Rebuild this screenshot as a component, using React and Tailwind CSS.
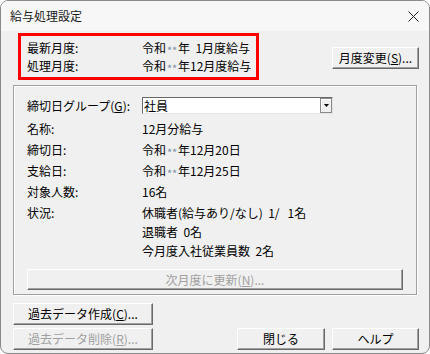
import React from "react";

const font = { fontFamily: '"Noto Sans CJK JP", "Noto Sans", sans-serif' };

function Btn({ children, className = "", disabled = false }) {
  return (
    <div
      className={
        "flex items-center justify-center bg-[#f0f0f0] border-t border-l border-t-white border-l-white border-b border-r border-b-[#696969] border-r-[#696969] shadow-[inset_-1px_-1px_0_#a0a0a0] text-[12px] leading-none " +
        (disabled ? "text-[#a0a0a0] " : "text-black ") +
        className
      }
    >
      {children}
    </div>
  );
}

function Stars() {
  return <span className="inline-block w-[12px] text-center text-[11px] leading-[11px] text-[#7d8ea8] relative top-[2px]">**</span>;
}

export default function App() {
  return (
    <div style={font} className="w-[430px] h-[354px] bg-[#f0f0f0] border border-[#8a8a8a] rounded-[8px] overflow-hidden flex flex-col text-black text-[12px]">
      <div className="h-[30px] shrink-0 bg-[#f7f7f7] flex items-center justify-between pl-[9px] pr-[9px]">
        <span className="text-[12px] text-[#1a1a1a]">給与処理設定</span>
        <svg width="11" height="11" viewBox="0 0 11 11" className="mr-[1px]">
          <path d="M0.5 0.5 L10.5 10.5 M10.5 0.5 L0.5 10.5" stroke="#222" strokeWidth="1" />
        </svg>
      </div>
      <div className="flex flex-col pl-[12px] pr-[10px]">
        <div className="flex mt-[2px]">
          <div className="ml-[5px] w-[241px] h-[47px] border-[3px] border-[#ff0000] flex flex-col py-[3px] pl-[6px] leading-[18px]">
            <div className="flex">
              <span className="w-[115px]">最新月度:</span>
              <span>令和<Stars />年&nbsp;&nbsp;1月度給与</span>
            </div>
            <div className="flex">
              <span className="w-[115px]">処理月度:</span>
              <span>令和<Stars />年12月度給与</span>
            </div>
          </div>
          <Btn className="ml-auto mt-[14px] w-[87px] h-[22px]">
            月度変更(<u>S</u>)...
          </Btn>
        </div>
        <div className="mt-[5px] w-[404px] h-[210px] border border-[#a0a0a0] shadow-[inset_1px_1px_0_#fff,1px_1px_0_#fff] flex flex-col pt-[11px] pl-[13px]">
          <div className="flex items-center h-[17px]">
            <span className="w-[115px]">締切日グループ(<u>G</u>):</span>
            <div className="w-[191px] h-[17px] bg-white border border-t-[#696969] border-l-[#696969] border-b-[#e3e3e3] border-r-[#e3e3e3] flex items-center">
              <span className="flex-1 pl-[1px] leading-none">社員</span>
              <div className="w-[12px] h-[15px] bg-[#f0f0f0] border border-[#8a8a8a] shadow-[inset_1px_1px_0_#fff] flex items-center justify-center">
                <svg width="5" height="3" viewBox="0 0 5 3">
                  <path d="M0 0 H5 L2.5 3 Z" fill="#000" />
                </svg>
              </div>
            </div>
          </div>
          <div className="mt-[4px] flex flex-col">
            <div className="flex items-center h-[21px]">
              <span className="w-[115px]">名称:</span>
              <span>12月分給与</span>
            </div>
            <div className="flex items-center h-[21px]">
              <span className="w-[115px]">締切日:</span>
              <span>令和<Stars />年12月20日</span>
            </div>
            <div className="flex items-center h-[21px]">
              <span className="w-[115px]">支給日:</span>
              <span>令和<Stars />年12月25日</span>
            </div>
            <div className="flex items-center h-[21px]">
              <span className="w-[115px]">対象人数:</span>
              <span>16名</span>
            </div>
            <div className="flex leading-[19px] pt-[1px]">
              <span className="w-[115px]">状況:</span>
              <div className="flex flex-col">
                <span>休職者(給与あり/なし)&nbsp;&nbsp;1/&nbsp;&nbsp;&nbsp;1名</span>
                <span>退職者&nbsp;&nbsp;0名</span>
                <span>今月度入社従業員数&nbsp;&nbsp;2名</span>
              </div>
            </div>
          </div>
          <Btn disabled className="mt-[9px] w-[376px] h-[21px]">
            次月度に更新(<u>N</u>)...
          </Btn>
        </div>
        <Btn className="mt-[8px] w-[140px] h-[22px]">
          過去データ作成(<u>C</u>)...
        </Btn>
        <div className="flex mt-[3px] items-center">
          <Btn disabled className="w-[140px] h-[22px]">
            過去データ削除(<u>R</u>)...
          </Btn>
          <Btn className="ml-[84px] w-[88px] h-[22px]">閉じる</Btn>
          <Btn className="ml-[7px] w-[87px] h-[22px]">ヘルプ</Btn>
        </div>
      </div>
    </div>
  );
}
